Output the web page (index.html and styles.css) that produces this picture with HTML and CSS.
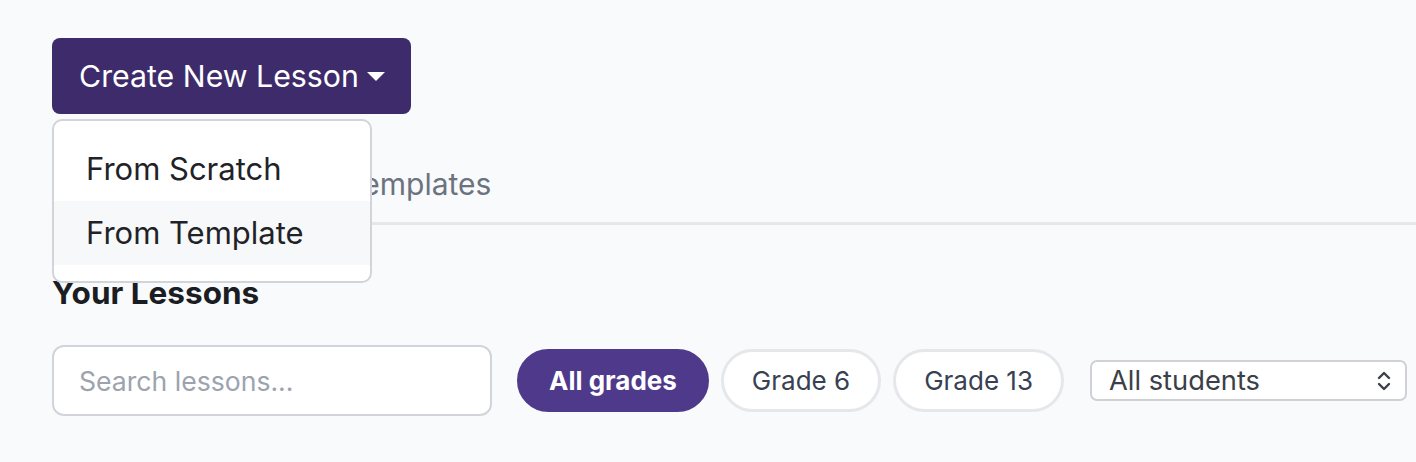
FILE: index.html
```html
<!DOCTYPE html>
<html lang="en">
<head>
    <meta charset="UTF-8">
    <meta name="viewport" content="width=device-width, initial-scale=1.0">
    <title>Lessons</title>
    <link rel="stylesheet" href="styles.css">
</head>
<body>
    <main class="page">
        <div class="create">
            <button type="button" class="create-btn">Create New Lesson <span class="caret"></span></button>
            <div class="menu">
                <a class="menu-item">From Scratch</a>
                <a class="menu-item hover">From Template</a>
            </div>
        </div>

        <nav class="tabs">
            <a class="tab active">My Lessons</a>
            <a class="tab">Templates</a>
        </nav>

        <h2 class="heading">Your Lessons</h2>

        <div class="filters">
            <input type="text" class="search" placeholder="Search lessons...">
            <div class="pills">
                <button type="button" class="pill active">All grades</button>
                <button type="button" class="pill">Grade 6</button>
                <button type="button" class="pill">Grade 13</button>
            </div>
            <div class="select">
                <span>All students</span>
                <svg width="14" height="22" viewBox="0 0 14 22" fill="none" stroke="#3b3f47" stroke-width="2.4" stroke-linecap="round" stroke-linejoin="round">
                    <path d="M2 8 L7 3 L12 8"/>
                    <path d="M2 14 L7 19 L12 14"/>
                </svg>
            </div>
        </div>
    </main>
</body>
</html>
```

FILE: styles.css
```css
body {
    margin: 0;
    background-color: #f9fafb;
    font-family: Inter, "Noto Sans", sans-serif;
    color: #1f2328;
}

.page {
    padding: 38px 0 0 52px;
}

.create {
    position: relative;
    display: inline-block;
}

.create-btn {
    display: flex;
    align-items: center;
    gap: 8px;
    height: 76px;
    padding: 0 26px 0 27px;
    border: none;
    border-radius: 8px;
    background-color: #3d2b6b;
    color: #ffffff;
    font-family: inherit;
    font-size: 30.3px;
    cursor: pointer;
}

.caret {
    width: 0;
    height: 0;
    border-left: 9px solid transparent;
    border-right: 9px solid transparent;
    border-top: 9px solid #ffffff;
}

.menu {
    position: absolute;
    top: 81px;
    left: 0;
    z-index: 2;
    width: 316px;
    padding: 16px 0;
    border: 2px solid #d2d4d9;
    border-radius: 10px;
    background-color: #ffffff;
}

.menu-item {
    display: block;
    height: 64px;
    line-height: 64px;
    padding: 0 32px;
    font-size: 31px;
    color: #1f2328;
}

.menu-item.hover {
    background-color: #f7f8fa;
}

.tabs {
    display: flex;
    gap: 99px;
    margin-top: 52px;
    border-bottom: 3px solid #e5e7eb;
}

.tab {
    position: relative;
    padding: 0 8px 20px;
    line-height: 36px;
    font-size: 30px;
    color: #6b7280;
}

.tab.active {
    color: #3d2b6b;
}

.tab.active::after {
    content: "";
    position: absolute;
    left: 0;
    right: 0;
    bottom: -3px;
    height: 4px;
    background-color: #3d2b6b;
}

.heading {
    margin: 50px 0 34px;
    font-size: 31.5px;
    line-height: 36px;
    font-weight: 700;
    color: #1a1d23;
}

.filters {
    display: flex;
    align-items: center;
}

.search {
    box-sizing: border-box;
    width: 440px;
    height: 71px;
    padding: 0 25px;
    border: 2px solid #d1d5db;
    border-radius: 12px;
    background-color: #ffffff;
    font-family: inherit;
    font-size: 26.6px;
    color: #1f2328;
}

.search::placeholder {
    color: #9ca3af;
}

.pills {
    display: flex;
    gap: 12px;
    margin-left: 25px;
}

.pill {
    box-sizing: border-box;
    height: 63px;
    padding: 0 28px;
    border: 3px solid #e5e7eb;
    border-radius: 32px;
    background-color: #ffffff;
    font-family: inherit;
    font-size: 26px;
    color: #374151;
    cursor: pointer;
}

.pill.active {
    padding: 0 29px;
    border-color: #4f398a;
    background-color: #4f398a;
    color: #ffffff;
    font-weight: 700;
}

.select {
    box-sizing: border-box;
    display: flex;
    align-items: center;
    justify-content: space-between;
    width: 317px;
    height: 41px;
    margin-left: 26px;
    padding: 0 14px 0 17px;
    border: 2px solid #cfd1d6;
    border-radius: 7px;
    background-color: #ffffff;
    font-size: 27.3px;
    color: #3b3f47;
}
```
